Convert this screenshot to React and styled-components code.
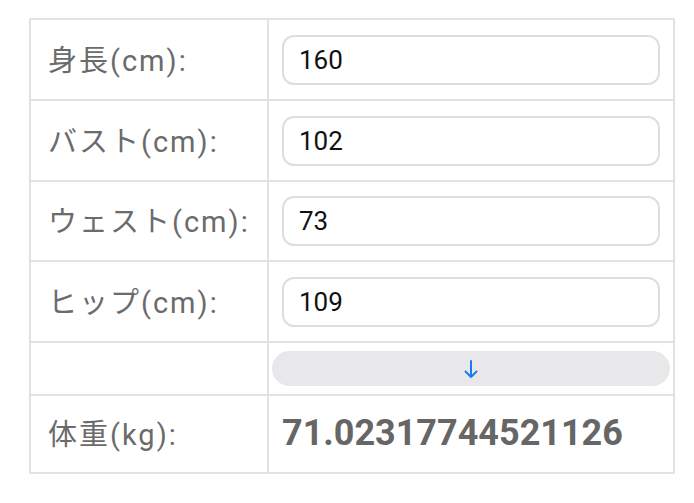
import React from "react";
import styled, { createGlobalStyle } from "styled-components";

const Global = createGlobalStyle`
  html, body { margin: 0; padding: 0; background: #fff; }
  body { font-family: Roboto, "Noto Sans CJK JP", sans-serif; }
`;

const Page = styled.div`
  padding: 18px 0 0 29px;
`;

const Table = styled.table`
  border-collapse: collapse;
  width: 646px;
  table-layout: fixed;
  border: 2px solid #e2e2e2;
`;

const Row = styled.tr`
  height: ${(p) => p.$h}px;
`;

const LabelCell = styled.td`
  width: 219px;
  border: 2px solid #e2e2e2;
  padding: 0 0 4px 17px;
  font-size: 29px;
  letter-spacing: 2px;
  color: #6b6b6b;
  vertical-align: middle;
  white-space: nowrap;
`;

const ValueCell = styled.td`
  border: 2px solid #e2e2e2;
  padding: 0 ${(p) => p.$pad}px;
  vertical-align: middle;
`;

const Input = styled.input`
  box-sizing: border-box;
  width: 100%;
  height: 50px;
  border: 2px solid #dedede;
  border-radius: 12px;
  padding: 0 0 0 15px;
  font-family: Roboto, sans-serif;
  font-size: 26px;
  color: #111;
  background: #fff;
  outline: none;
  display: block;
`;

const CalcButton = styled.button`
  display: flex;
  align-items: center;
  justify-content: center;
  width: 100%;
  height: 35px;
  border: none;
  border-radius: 18px;
  background: #e8e8ea;
  padding: 0;
`;

const Result = styled.span`
  display: inline-block;
  font-size: 36px;
  font-weight: 700;
  color: #666;
  padding: 0 0 3px 0;
`;

const ArrowDown = () => (
  <svg width="14" height="20" viewBox="0 0 14 20" fill="none">
    <path
      d="M7 2 V18 M1.5 12.5 L7 18 L12.5 12.5"
      stroke="#1a7cf5"
      strokeWidth="2"
      strokeLinecap="round"
      strokeLinejoin="round"
    />
  </svg>
);

const fields = [
  ["身長(cm):", "160"],
  ["バスト(cm):", "102"],
  ["ウェスト(cm):", "73"],
  ["ヒップ(cm):", "109"],
];

export default function App() {
  return (
    <Page>
      <Global />
      <Table>
        <tbody>
          {fields.map(([label, value], i) => (
            <Row key={label} $h={i === 2 ? 80 : 81}>
              <LabelCell>{label}</LabelCell>
              <ValueCell $pad={13}>
                <Input defaultValue={value} />
              </ValueCell>
            </Row>
          ))}
          <Row $h={53}>
            <LabelCell />
            <ValueCell $pad={3}>
              <CalcButton aria-label="計算">
                <ArrowDown />
              </CalcButton>
            </ValueCell>
          </Row>
          <Row $h={78}>
            <LabelCell>体重(kg):</LabelCell>
            <ValueCell $pad={13}>
              <Result>71.02317744521126</Result>
            </ValueCell>
          </Row>
        </tbody>
      </Table>
    </Page>
  );
}
